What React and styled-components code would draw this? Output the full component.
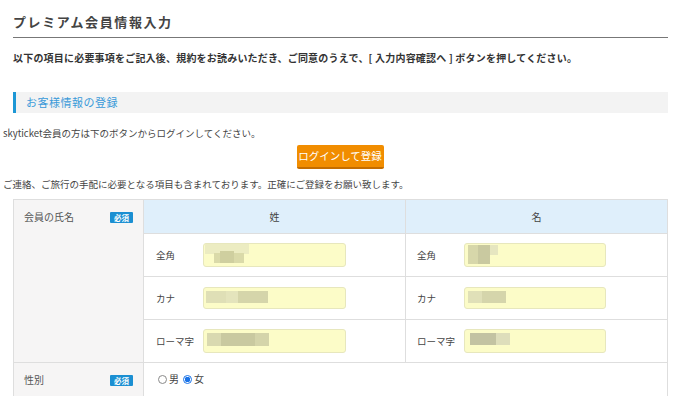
import React from 'react';
import styled, { createGlobalStyle } from 'styled-components';

const Global = createGlobalStyle`
  html, body { margin: 0; padding: 0; background: #fff; }
  body {
    font-family: "Noto Sans CJK JP", "Noto Sans", sans-serif;
    color: #333;
  }
  * { box-sizing: border-box; }
`;

const Page = styled.div`
  width: 680px;
  padding: 0 12px 0 13px;
`;

const Title = styled.h1`
  margin: 0;
  padding: 12px 0 5px;
  font-size: 13px;
  line-height: 20px;
  font-weight: 700;
  letter-spacing: 1.6px;
  color: #444;
  border-bottom: 1px solid #777;
`;

const Lead = styled.p`
  margin: 12px 0 0;
  font-size: 10px;
  line-height: 16px;
  font-weight: 700;
  letter-spacing: 0.2px;
  color: #333;
`;

const SectionBar = styled.h2`
  margin: 26px 0 0;
  height: 21px;
  padding-left: 10px;
  border-left: 3px solid #1d97d5;
  background: #f3f3f3;
  font-size: 11px;
  line-height: 21px;
  font-weight: 400;
  color: #3a9ad9;
  letter-spacing: 0.5px;
`;

const Note = styled.p`
  margin: ${p => p.$gap}px 0 0 -10px;
  font-size: 9.5px;
  line-height: 14px;
  color: #444;
`;

const ButtonRow = styled.div`
  display: flex;
  justify-content: center;
  margin: 5px -12px 0 -13px;
`;

const LoginButton = styled.button`
  width: 87px;
  height: 24px;
  border: none;
  border-bottom: 2px solid #c46d00;
  border-radius: 2px;
  background: #f18d00;
  color: #fff;
  font-family: inherit;
  font-size: 10.5px;
  line-height: 22px;
  padding: 0;
`;

const Table = styled.table`
  margin-top: 8px;
  width: 655px;
  border-collapse: collapse;
  table-layout: fixed;
  font-size: 10px;
`;

const Row = styled.tr`
  height: ${p => p.$h}px;
`;

const LabelCell = styled.th`
  width: 130px;
  background: #f6f5f5;
  border: 1px solid #dedede;
  vertical-align: top;
  padding: ${p => p.$pt}px 10px 0 10px;
  font-weight: 400;
  text-align: left;
`;

const LabelInner = styled.div`
  display: flex;
  justify-content: space-between;
  align-items: center;
  color: #555;
  font-size: 10px;
  line-height: 14px;
`;

const Badge = styled.span`
  display: inline-block;
  width: 23px;
  height: 11px;
  background: #1b8fd2;
  color: #fff;
  font-size: 7.5px;
  font-weight: 700;
  line-height: 11px;
  text-align: center;
  border-radius: 1px;
`;

const HeadCell = styled.th`
  background: #dfeffb;
  border: 1px solid #dedede;
  font-weight: 400;
  font-size: 10px;
  color: #444;
  text-align: center;
`;

const FieldCell = styled.td`
  border: 1px solid #dedede;
  padding: 0 0 0 ${p => p.$pl}px;
  vertical-align: middle;
`;

const Field = styled.div`
  display: flex;
  align-items: center;
`;

const SubLabel = styled.span`
  width: 47px;
  flex: none;
  color: #444;
  font-size: 9.5px;
`;

const InputBox = styled.div`
  position: relative;
  width: ${p => p.$w}px;
  height: ${p => p.$h}px;
  background: #fcfcc8;
  border: 1px solid #e7e7bd;
  border-radius: 3px;
  overflow: hidden;
`;

const Mosaic = styled.svg`
  display: block;
`;

const RadioCell = styled.td`
  border: 1px solid #dedede;
  border-bottom: none;
  vertical-align: top;
  padding: 9px 0 0 14px;
`;

const RadioGroup = styled.div`
  display: flex;
  align-items: center;
  gap: 4px;
  font-size: 10px;
  color: #444;
  line-height: 14px;
`;

const RadioLabel = styled.label`
  display: inline-flex;
  align-items: center;
  gap: 2px;
`;

const Radio = styled.input`
  appearance: none;
  margin: 0;
  width: 9px;
  height: 9px;
  border-radius: 50%;
  border: 1px solid ${p => (p.checked ? '#1a73e8' : '#8a8a8a')};
  background: ${p => (p.checked ? 'radial-gradient(circle, #1a73e8 0 2.6px, #fff 3px)' : '#fff')};
`;

const mosaics = {
  l1: [[1, 0, 44, 10, '#ececc2'], [10, 9, 30, 10, '#dadaa9'], [16, 7, 14, 12, '#cfcf9f']],
  l2: [[2, 3, 20, 12, '#dfdfb6'], [22, 3, 12, 12, '#e4e4bc'], [34, 3, 30, 12, '#d5d5aa']],
  l3: [[3, 3, 14, 13, '#d9d9b0'], [17, 3, 34, 13, '#c9c9a0'], [51, 3, 14, 13, '#d4d4aa']],
  r1: [[3, 1, 10, 19, '#d7d7aa'], [13, 1, 12, 19, '#c9c9a0'], [25, 1, 8, 10, '#e6e6c0']],
  r2: [[3, 3, 14, 12, '#e0e0b8'], [17, 3, 24, 12, '#d5d5ab']],
  r3: [[5, 3, 26, 12, '#c3c3a2'], [31, 3, 14, 12, '#dedebb']],
};

function Input({ w, h, m }) {
  return (
    <InputBox $w={w} $h={h}>
      <Mosaic width={w - 2} height={h - 2}>
        {mosaics[m].map(([x, y, rw, rh, c], i) => (
          <rect key={i} x={x} y={y} width={rw} height={rh} fill={c} />
        ))}
      </Mosaic>
    </InputBox>
  );
}

const rows = [
  { label: '全角', h: 43, ih: 24, l: 'l1', r: 'r1' },
  { label: 'カナ', h: 43, ih: 22, l: 'l2', r: 'r2' },
  { label: 'ローマ字', h: 43, ih: 24, l: 'l3', r: 'r3' },
];

export default function App() {
  return (
    <>
      <Global />
      <Page>
        <Title>プレミアム会員情報入力</Title>
        <Lead>
          以下の項目に必要事項をご記入後、規約をお読みいただき、ご同意のうえで、[ 入力内容確認へ ] ボタンを押してください。
        </Lead>
        <SectionBar>お客様情報の登録</SectionBar>
        <Note $gap={13}>skyticket会員の方は下のボタンからログインしてください。</Note>
        <ButtonRow>
          <LoginButton type="button">ログインして登録</LoginButton>
        </ButtonRow>
        <Note $gap={8}>ご連絡、ご旅行の手配に必要となる項目も含まれております。正確にご登録をお願い致します。</Note>
        <Table>
          <colgroup>
            <col style={{ width: 130 }} />
            <col />
            <col />
          </colgroup>
          <tbody>
            <Row $h={34}>
              <LabelCell rowSpan={4} $pt={10}>
                <LabelInner>
                  <span>会員の氏名</span>
                  <Badge>必須</Badge>
                </LabelInner>
              </LabelCell>
              <HeadCell>姓</HeadCell>
              <HeadCell>名</HeadCell>
            </Row>
            {rows.map(r => (
              <Row key={r.label} $h={r.h}>
                <FieldCell $pl={12}>
                  <Field>
                    <SubLabel>{r.label}</SubLabel>
                    <Input w={143} h={r.ih} m={r.l} />
                  </Field>
                </FieldCell>
                <FieldCell $pl={11}>
                  <Field>
                    <SubLabel>{r.label}</SubLabel>
                    <Input w={142} h={r.ih} m={r.r} />
                  </Field>
                </FieldCell>
              </Row>
            ))}
            <Row $h={40}>
              <LabelCell $pt={10}>
                <LabelInner>
                  <span>性別</span>
                  <Badge>必須</Badge>
                </LabelInner>
              </LabelCell>
              <RadioCell colSpan={2}>
                <RadioGroup>
                  <RadioLabel>
                    <Radio type="radio" name="sex" readOnly />男
                  </RadioLabel>
                  <RadioLabel>
                    <Radio type="radio" name="sex" checked readOnly />女
                  </RadioLabel>
                </RadioGroup>
              </RadioCell>
            </Row>
          </tbody>
        </Table>
      </Page>
    </>
  );
}
